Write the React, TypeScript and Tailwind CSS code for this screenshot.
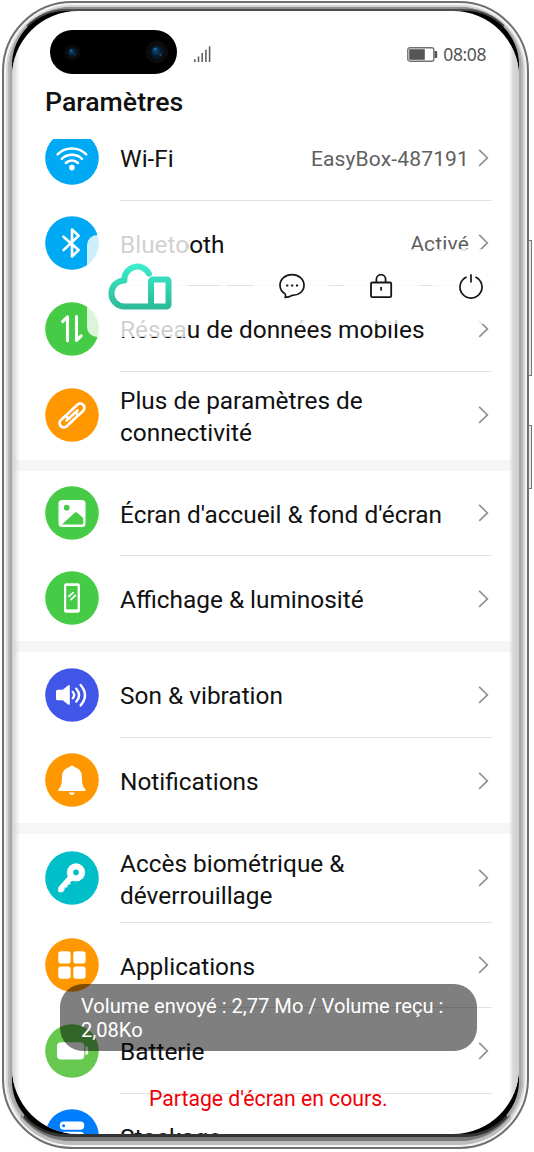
import React from 'react';
import clsx from 'clsx';

type RowProps = {
  icon: React.ReactNode;
  color: string;
  label: React.ReactNode;
  value?: string;
  height: string;
  last?: boolean;
};

const WifiIcon = () => (
  <g fill="none" stroke="#fff" strokeWidth="2.5" strokeLinecap="round">
    <path d="M12.6 23.3a20.5 20.5 0 0 1 28.6 0M16.8 27.8a14.4 14.4 0 0 1 20.2 0M20.8 32a8.8 8.8 0 0 1 12.2 0" />
    <circle cx="26.9" cy="36.6" r="2.8" fill="#fff" stroke="none" />
  </g>
);

const BluetoothIcon = () => (
  <path d="M18.5 20.7 33.6 34 27 40.6V13.5l6.6 6.2-15.1 14.4" fill="none" stroke="#fff" strokeWidth="2.6" strokeLinecap="round" strokeLinejoin="round" />
);

const DataIcon = () => (
  <path d="M17.7 19.5 22.5 15V38.8M31.5 14.5V38.5L36.2 33.8" fill="none" stroke="#fff" strokeWidth="3.1" strokeLinecap="round" strokeLinejoin="round" />
);

const LinkIcon = () => (
  <g transform="translate(27 27.5) rotate(-43)" fill="none" stroke="#fff" strokeWidth="2.7" strokeLinecap="round">
    <path d="M4.5 4.2H11.2a4.2 4.2 0 0 0 0-8.4H-1.500Q-5-4.2-5-1.8-5 0-2.5 0H7.5" />
    <path d="M-5-4.2H-11.2a4.2 4.2 0 0 0 0 8.4H1.500Q5 4.2 5 1.8M-7.5 0H-2.5" />
  </g>
);

const ImageIcon = () => (
  <>
    <rect x="13.5" y="14" width="27" height="27" rx="3.5" fill="#fff" />
    <circle cx="21.7" cy="21.7" r="2.9" fill="#45cb46" />
    <path d="M17 38.6 29.4 26.9q1.6-1.4 3.2 0L38.2 32v5q0 1.6-1.6 1.6z" fill="#45cb46" />
  </>
);

const DisplayIcon = () => (
  <>
    <rect x="19" y="12.2" width="16" height="29.6" rx="2.2" fill="#fff" />
    <path d="M21.2 15h11.4v23.4H21.2z" fill="#45cb46" />
    <path d="M23.8 25.3 28.2 21.7M26 28.6 30.4 24.4" stroke="#fff" strokeWidth="1.7" strokeLinecap="round" />
  </>
);

const SoundIcon = () => (
  <>
    <path d="M12.5 21.8h5.2L23 17.4q1.8-1 1.8.8v17.6q0 1.8-1.8.8l-5.3-4.4h-5.2q-1.5 0-1.5-1.5v-7.4q0-1.5 1.5-1.5z" fill="#fff" />
    <path d="M27.8 24q2.8 3 0 6.2M31.3 20.7q5.6 6.4 0 12.8M35.6 17q8.8 10.2 0 20.4" fill="none" stroke="#fff" strokeWidth="2.4" strokeLinecap="round" />
  </>
);

const BellIcon = () => (
  <>
    <path d="M26.9 12.5q1.8 0 2.2 1.5c4.6 1.1 7.8 4.8 7.8 9.3 0 6.5.4 9.8 3.6 13.3v1.3h-27.1v-1.3c3.2-3.5 3.6-6.8 3.6-13.3 0-4.5 3.2-8.2 7.8-9.3q.4-1.5 2.1-1.5z" fill="#fff" />
    <path d="M23.9 39.5h6q-.7 2.6-3 2.6t-3-2.6z" fill="#fff" />
  </>
);

const KeyIcon = () => (
  <>
    <path d="M24.5 23.5 13.8 35.8q-.6.8-.6 1.7v2.6q0 1.2 1.2 1.2h2.4q.8 0 1.2-.6l1.6-2 .1-2.1h2.6l.6-2.8 2.3-.4.4-2.6 4.6-2.4z" fill="#fff" />
    <circle cx="31" cy="21.4" r="9.1" fill="#fff" />
    <circle cx="31" cy="21.4" r="2.8" fill="#00bfc9" />
  </>
);

const AppsIcon = () => (
  <g fill="#fff">
    <rect x="13.3" y="13.3" width="12.3" height="12.3" rx="2.8" />
    <rect x="28.3" y="13.3" width="12.3" height="12.3" rx="2.8" />
    <rect x="13.3" y="28.5" width="12.3" height="12.3" rx="2.8" />
    <rect x="28.3" y="28.5" width="12.3" height="12.3" rx="2.8" />
  </g>
);

const BatteryIcon = () => (
  <g fill="#fff">
    <rect x="12" y="18.2" width="27.2" height="17.2" rx="4" />
    <path d="M40.4 22.2q2.8 0 2.8 2.4v4q0 2.4-2.8 2.4z" />
  </g>
);

const StorageIcon = () => (
  <>
    <rect x="14.7" y="12.6" width="24.6" height="8.2" rx="4.1" fill="#fff" />
    <circle cx="18.6" cy="16.7" r="1.5" fill="#007dff" />
    <rect x="14.7" y="22.8" width="24.6" height="8.2" rx="4.1" fill="#fff" />
  </>
);

const Chevron = () => (
  <svg className="ml-[9px] h-5 w-[11px] shrink-0" viewBox="0 0 11 20" fill="none" stroke="#8f8f8f" strokeWidth="1.6">
    <path d="M1.2 1.9 9.4 9.9 1.2 17.9" />
  </svg>
);

const Row = ({ icon, color, label, value, height, last }: RowProps) => (
  <div className={clsx('flex shrink-0 pl-[33px] pr-[27px]', height)}>
    <div className="flex items-center pb-px">
      <svg className="h-[54px] w-[54px]" viewBox="0 0 54 54">
        <circle cx="27" cy="27" r="26.8" fill={color} />
        {icon}
      </svg>
    </div>
    <div className={clsx('ml-[21px] flex flex-1 items-center pr-[3px]', !last && 'border-b border-[#e2e2e2]')}>
      <div className="flex-1 whitespace-nowrap pt-[3px] text-[24.4px] leading-[32px] text-[#111]">{label}</div>
      {value && <div className="pt-[2px] text-[21px] leading-[30px] tracking-[0.15px] text-[#606060]">{value}</div>}
      <Chevron />
    </div>
  </div>
);

const Band = () => <div className="h-[11px] shrink-0 bg-[#f6f6f6]" />;

const Camera = ({ size }: { size: number }) => (
  <svg width={size} height={size} viewBox="0 0 20 20">
    <circle cx="10" cy="10" r="9.5" fill="#0b0b0d" />
    <circle cx="10" cy="10" r="5.6" fill="#051a2c" />
    <circle cx="9" cy="9" r="3" fill="#0b3a60" />
    <circle cx="8.6" cy="7.6" r="1.1" fill="#256f9e" />
    <circle cx="12.8" cy="12.2" r="1" fill="#174e75" />
  </svg>
);

const StatusBar = () => (
  <div className="flex h-[44px] shrink-0 items-center pl-[38px] pr-[33px]">
    <div className="flex h-[44px] w-[127px] items-center justify-between rounded-full bg-black pl-[14px] pr-[8px]">
      <Camera size={17} />
      <Camera size={24} />
    </div>
    <svg className="ml-[17px] mt-[5px] h-[17px] w-[17px]" viewBox="0 0 17 17" fill="#5f5f5f">
      <path d="M0 13.3h1.6V16H0zM3.7 10.5h1.6V16H3.7zM7.4 7h1.6v9H7.4zM11.1 3.8h1.6V16h-1.6zM14.8.3h1.6V16h-1.6z" />
    </svg>
    <svg className="ml-auto mt-[5px] h-[15px] w-[31px]" viewBox="0 0 31 15">
      <rect x="0.8" y="0.8" width="26" height="13.4" rx="2" fill="#fff" stroke="#707070" strokeWidth="1.4" />
      <rect x="2.2" y="2.2" width="15.6" height="10.6" fill="#555" />
      <path d="M27.5 4h1.8q.9 0 .9.9v5.2q0 .9-.9.9h-1.8z" fill="#555" />
    </svg>
    <div className="ml-[5px] mt-[4px] font-['Noto_Sans',sans-serif] text-[17.5px] leading-[20px] tracking-[-0.4px] text-[#555]">08:08</div>
  </div>
);

// Translucent control strip that floats over the list
const FloatingBar = () => (
  <div className="absolute left-[75px] top-[224px] flex items-center">
    <div className="flex h-[102px] w-[101px] items-center rounded-l-[10px] bg-white/80 pl-[18px]">
      <svg className="h-[52px] w-[70px]" viewBox="0 0 70 52" fill="none">
        <defs>
          <linearGradient id="cloud" x1="0" y1="2" x2="0" y2="49" gradientUnits="userSpaceOnUse">
            <stop offset="0" stopColor="#3cf0cf" />
            <stop offset="1" stopColor="#2cb997" />
          </linearGradient>
        </defs>
        <g stroke="url(#cloud)" strokeWidth="6">
          <path d="M43.9 13.6A13 13 0 0 0 19.4 20.4 12.8 12.8 0 0 0 19.4 46.4H46" strokeLinecap="round" strokeLinejoin="round" />
          <rect x="46" y="19.6" width="17.5" height="26.8" rx="1.5" />
        </g>
      </svg>
    </div>
    <div className="ml-[33px] h-[60px] w-[5px] bg-white/80" />
    <div className="ml-[28px] flex gap-[14.5px]">
      <div className="flex h-[75px] w-[75px] items-center justify-center bg-white/80">
        <svg className="h-[26px] w-[26px]" viewBox="0 0 26 26" fill="none" stroke="#161616" strokeWidth="1.7" strokeLinejoin="round">
          <path d="M6.1 20.9C3 19 1 15.8 1 12.3 1 6.3 6.3 1.6 13 1.6S25 6.3 25 12.3 19.7 22.3 13.5 22.3Q9.3 24.5 6.1 24.4 7 23 6.1 20.9Z" />
          <path d="M7.2 11.4h2.1v2.1H7.2zM12.1 11.4h2.1v2.1h-2.1zM17 11.4h2.1v2.1H17z" fill="#161616" stroke="none" />
        </svg>
      </div>
      <div className="flex h-[75px] w-[75px] items-center justify-center bg-white/80">
        <svg className="h-[26px] w-[24px]" viewBox="0 0 24 26" fill="none" stroke="#161616" strokeWidth="1.8">
          <rect x="2" y="9.5" width="20.2" height="14.6" rx="1.2" />
          <path d="M7.4 9.5V6.3a4.6 4.6 0 0 1 9.2 0V9.5M12.1 14v3.6" />
        </svg>
      </div>
      <div className="flex h-[75px] w-[75px] items-center justify-center bg-white/80">
        <svg className="h-[26px] w-[26px]" viewBox="0 0 26 26" fill="none" stroke="#161616" strokeWidth="1.7">
          <path d="M8.6 4A11 11 0 1 0 17.4 4M13 1.2V9.6" />
        </svg>
      </div>
    </div>
  </div>
);

const App = () => {
  return (
    <div className="flex h-[1152px] w-[534px] overflow-hidden bg-white pl-[2px] pt-[1px] font-[Roboto,sans-serif]">
      <div className="h-[1148px] w-[527px] shrink-0 rounded-[70px] border-2 border-[#6f6f6f] bg-[#f4f4f4] p-[2px]">
        <div className="h-full w-full rounded-[66px] border-2 border-b-4 border-[#d6d6d6] border-b-[#bcbcbc] bg-[#999]">
          <div className="h-full w-full rounded-[63px] border-2 border-b-4 border-x-[#b8b8b8] border-b-[#777] border-t-[#8f8f8f] bg-[#777]">
            <div className="h-full w-full rounded-[56px] border-2 border-b-[3px] border-x-[#a6a6a6] border-b-[#333] border-t-[#4c4c4c] bg-black">
              <div className="relative flex h-full w-full flex-col overflow-hidden rounded-[66px] bg-white pt-[19px]">
                <StatusBar />
                <h1 className="h-[65px] shrink-0 pl-[33px] pt-[11px] text-[26.7px] font-medium leading-[34px] text-[#111]">Paramètres</h1>
                <div className="flex min-h-0 flex-1 flex-col overflow-hidden">
                  <div className="-mt-[24px] flex flex-col">
                    <Row icon={<WifiIcon />} color="#00a9f4" label="Wi-Fi" value="EasyBox-487191" height="h-[86px]" />
                    <Row icon={<BluetoothIcon />} color="#00a9f4" label="Bluetooth" value="Activé" height="h-[85px]" />
                    <Row icon={<DataIcon />} color="#45cb46" label="Réseau de données mobiles" height="h-[86px]" />
                    <Row icon={<LinkIcon />} color="#ff9800" label={<>Plus de paramètres de<br />connectivité</>} height="h-[88px] pb-[2px]" last />
                    <Band />
                    <Row icon={<ImageIcon />} color="#45cb46" label="Écran d'accueil &amp; fond d'écran" height="h-[85px]" />
                    <Row icon={<DisplayIcon />} color="#45cb46" label="Affichage &amp; luminosité" height="h-[85px]" last />
                    <Band />
                    <Row icon={<SoundIcon />} color="#4056e8" label="Son &amp; vibration" height="h-[86px]" />
                    <Row icon={<BellIcon />} color="#ff9800" label="Notifications" height="h-[85px]" last />
                    <Band />
                    <Row icon={<KeyIcon />} color="#00bfc9" label={<>Accès biométrique &amp;<br />déverrouillage</>} height="h-[89px]" />
                    <Row icon={<AppsIcon />} color="#ff9800" label="Applications" height="h-[85px]" />
                    <Row icon={<BatteryIcon />} color="#67c850" label="Batterie" height="h-[86px]" />
                    <Row icon={<StorageIcon />} color="#007dff" label="Stockage" height="h-[85px]" last />
                  </div>
                </div>

                <FloatingBar />

                {/* Traffic toast */}
                <div className="absolute left-[48px] top-[973px] h-[67px] w-[417px] rounded-[23px] bg-black/50 pl-[21px] pt-[11px] text-[20.1px] leading-[23.5px] text-white">
                  Volume envoyé : 2,77 Mo / Volume reçu :<br />2,08Ko
                </div>
                <div className="absolute left-[137px] top-[1074px] whitespace-nowrap text-[21.2px] leading-[28px] text-[#f00006]">
                  Partage d'écran en cours.
                </div>

                {/* Curved glass edges */}
                <div className="absolute inset-y-0 left-0 w-[8px] bg-gradient-to-r from-[#d0d0d0] to-transparent" />
                <div className="absolute inset-y-0 right-0 w-[10px] bg-gradient-to-l from-[#cfcfcf] via-[#d9d9d9] via-60% to-transparent" />
              </div>
            </div>
          </div>
        </div>
      </div>

      {/* Side buttons */}
      <div className="-ml-[1px] flex flex-col">
        <div className="mt-[239px] h-[136px] w-[4px] border border-[#777] bg-[#e8e8e8]" />
        <div className="mt-[49px] h-[64px] w-[4px] border border-[#777] bg-[#e8e8e8]" />
      </div>
    </div>
  );
};

export default App;
